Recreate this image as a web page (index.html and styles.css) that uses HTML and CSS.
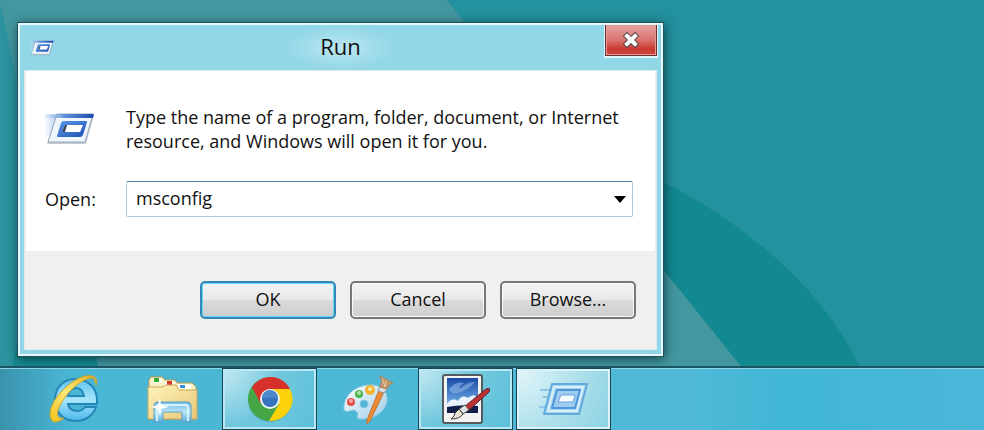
FILE: index.html
```html
<!DOCTYPE html>
<html lang="en">
<head>
    <meta charset="UTF-8">
    <meta name="viewport" content="width=device-width, initial-scale=1">
    <title>Run</title>
    <link rel="stylesheet" href="styles.css">
</head>
<body>

<!-- Wallpaper -->
<svg class="wallpaper" viewBox="0 0 984 430" preserveAspectRatio="xMinYMin slice" aria-hidden="true">
    <rect width="984" height="430" fill="#24919e"/>
    <path d="M560 140C690 180 810 262 860 367L892 430H400V140Z" fill="#128890"/>
    <path d="M0 0H447L792 430H0Z" fill="#44979f"/>
    <path d="M0 5C12 50 28 130 34 240L34 340L98 356L100 430H0Z" fill="#2b929e"/>
    <path d="M15 350H92L98 366V430H5Z" fill="#168a91"/>
</svg>

<main class="desktop">
    <section class="window" aria-labelledby="title">
        <header class="titlebar">
            <svg class="title-icon" viewBox="0 0 50 40" aria-hidden="true"><use href="#run-icon"/></svg>
            <h1 class="title" id="title">Run</h1>
            <button class="close-btn" type="button" aria-label="Close">
                <svg width="20" height="16" viewBox="0 0 20 16">
                    <path d="M6 4L14 12M14 4L6 12" stroke="#54444a" stroke-width="6" stroke-linecap="square"/>
                    <path d="M6 4L14 12M14 4L6 12" stroke="#fff" stroke-width="4" stroke-linecap="square"/>
                </svg>
            </button>
        </header>

        <form class="dialog">
            <div class="dialog-body">
                <svg class="run-icon" viewBox="0 0 50 40" aria-hidden="true"><use href="#run-icon"/></svg>
                <p class="message">Type the name of a program, folder, document, or Internet resource, and Windows will open it for you.</p>
                <label class="open-label" for="txtOpen">Open:</label>
                <div class="combo">
                    <input type="text" name="txtOpen" id="txtOpen" value="msconfig">
                    <button class="combo-btn" type="button" aria-label="Show list">
                        <svg width="12" height="7" viewBox="0 0 12 7"><path d="M0 0H12L6 7Z"/></svg>
                    </button>
                </div>
            </div>
            <div class="dialog-footer">
                <button class="btn default-btn" type="submit">OK</button>
                <button class="btn" type="button">Cancel</button>
                <button class="btn" type="button">Browse...</button>
            </div>
        </form>
    </section>
</main>

<nav class="taskbar" aria-label="Taskbar">
    <button class="task" type="button" aria-label="Internet Explorer">
        <svg width="52" height="52" viewBox="0 0 52 52">
            <defs>
                <linearGradient id="ie-blue" x1="0" y1="0" x2="0" y2="1">
                    <stop offset="0" stop-color="#5cc3ee"/>
                    <stop offset=".5" stop-color="#a6e6fb"/>
                    <stop offset="1" stop-color="#4ab6ea"/>
                </linearGradient>
                <linearGradient id="ie-gold" x1="0" y1="1" x2="1" y2="0">
                    <stop offset="0" stop-color="#f2c21b"/>
                    <stop offset=".5" stop-color="#ffe878"/>
                    <stop offset="1" stop-color="#e5b119"/>
                </linearGradient>
            </defs>
            <path fill-rule="evenodd" d="M27 6C40 6 49 15 49 27V31H20C21 36 24 38 29 38C33 38 35 37 37 34H48C45 43 37 48 28 48C15 48 7 39 7 27C7 15 15 6 27 6ZM20 23H36C35 18 33 15 28 15C23 15 21 18 20 23Z" fill="url(#ie-blue)" stroke="#2586b8" stroke-width="2"/>
            <path d="M48 12C52 1 38 -1 23 10C8 21 -1 37 3 46C5 51 11 49 16 45C6 47 8 36 18 23C28 10 43 2 46 6C47 8 48 10 48 12Z" fill="url(#ie-gold)" stroke="#c9a52d" stroke-width="1"/>
        </svg>
    </button>
    <button class="task" type="button" aria-label="File Explorer">
        <svg width="54" height="52" viewBox="0 0 54 52">
            <defs>
                <linearGradient id="folder" x1="0" y1="0" x2="1" y2="1">
                    <stop offset="0" stop-color="#fff3ba"/>
                    <stop offset="1" stop-color="#e6c779"/>
                </linearGradient>
                <linearGradient id="glass" x1="0" y1="0" x2="0" y2="1">
                    <stop offset="0" stop-color="#72bce5"/>
                    <stop offset=".5" stop-color="#b9e5f7"/>
                    <stop offset="1" stop-color="#5caee0"/>
                </linearGradient>
            </defs>
            <path d="M4 46V7L6 4H17L20 7H30L32 10H47L51 14V46Z" fill="#f9efc6" stroke="#bf9c4f"/>
            <path d="M8 5H17V10H8Z" fill="#fffef0"/><path d="M9 5H14V9H9Z" fill="#2caf32"/>
            <path d="M20 8H30V13H20Z" fill="#fffef0"/><path d="M22 8H27V12H22Z" fill="#d63a27"/>
            <path d="M33 11H46V16H33Z" fill="#fffef0"/><path d="M35 12H40V15H35Z" fill="#2c91d8"/>
            <path d="M3 14H18L21 12H31L34 17H52V46H3Z" fill="url(#folder)" stroke="#cba85a"/>
            <path d="M9 49V33Q9 29 13 29H42Q46 29 46 33V49H37V40Q37 39 36 39H19Q18 39 18 40V49Z" fill="url(#glass)" stroke="#579fc9"/>
            <path d="M12 48V35Q12 32 14 32H41Q43 32 43 35V48" fill="none" stroke="#d5f1fc" stroke-width="2"/>
            <path d="M15 24L16 32L24 34L16 36L15 43L13 36L6 34L13 32Z" fill="#fff"/>
        </svg>
    </button>
    <button class="task open" type="button" aria-label="Google Chrome">
        <svg width="48" height="48" viewBox="0 0 48 48">
            <circle cx="24" cy="25" r="22" fill="#2b7d97" opacity=".4"/>
            <circle cx="24" cy="24" r="22" fill="#45a646"/>
            <path d="M24 14H44A22 22 0 0 1 23 46L33 29Z" fill="#fcd20b"/>
            <path d="M24 14H44A22 22 0 0 0 6 12L15 29Z" fill="#d8302b"/>
            <circle cx="24" cy="24" r="10" fill="#f0f5f8"/>
            <circle cx="24" cy="24" r="8" fill="#3774bd"/>
            <path d="M16 23A8 8 0 0 1 32 23Q24 22 16 23Z" fill="#4e88cb"/>
        </svg>
    </button>
    <button class="task" type="button" aria-label="Paint">
        <svg width="52" height="52" viewBox="0 0 52 52">
            <defs>
                <linearGradient id="palette" x1="0" y1="0" x2="1" y2="1">
                    <stop offset="0" stop-color="#fff"/>
                    <stop offset="1" stop-color="#9bcde8"/>
                </linearGradient>
            </defs>
            <path fill-rule="evenodd" d="M2 37C1 23 12 13 27 12C39 11 46 18 45 28C43 40 30 47 17 46C13 45 18 41 14 38C10 35 7 41 2 37ZM22 27A4 4 0 1 0 22 35A4 4 0 1 0 22 27Z" fill="url(#palette)" stroke="#8fc6df"/>
            <circle cx="9" cy="29" r="4" fill="#e34f47"/><circle cx="9" cy="28" r="2" fill="#f5aaa4"/>
            <circle cx="17" cy="21" r="4" fill="#4bb64d"/><circle cx="17" cy="20" r="2" fill="#b1e4a7"/>
            <circle cx="28" cy="17" r="5" fill="#f3b32d"/><circle cx="28" cy="16" r="2" fill="#ffe5a0"/>
            <path d="M37 17L42 19L28 48L25 51V47Z" fill="#ec8b35" stroke="#c9742f"/>
            <path d="M38 13L45 16L42 20L36 18Z" fill="#dce2e4" stroke="#8798a0"/>
            <path d="M38 3L51 10Q46 11 45 16L38 14Q41 8 38 3Z" fill="#c4996a" stroke="#a4825d"/>
            <path d="M40 5L43 14M44 7L43 14" stroke="#e6c69a"/>
        </svg>
    </button>
    <button class="task open" type="button" aria-label="Paint.NET">
        <svg width="50" height="52" viewBox="0 0 50 52">
            <defs>
                <linearGradient id="sky" x1="0" y1="0" x2="0" y2="1">
                    <stop offset="0" stop-color="#1949a6"/>
                    <stop offset=".6" stop-color="#5d98d9"/>
                    <stop offset="1" stop-color="#bddcf1"/>
                </linearGradient>
            </defs>
            <rect x="2" y="2" width="39" height="48" rx="2" fill="#f4f4f4" stroke="#555a5e" stroke-width="2"/>
            <rect x="6" y="5" width="31" height="35" fill="url(#sky)"/>
            <path d="M8 16Q15 8 23 10Q17 13 19 16Q27 8 34 9Q27 18 16 20Q10 21 8 16Z" fill="#8db5e4" opacity=".6"/>
            <path d="M6 31Q11 24 17 28Q21 21 27 25Q34 19 37 26V36H6Z" fill="#eaf3fb"/>
            <path d="M6 34Q20 31 37 33V40H6Z" fill="#101d48"/>
            <path d="M23 34L45 16Q50 14 48 19L27 38Z" fill="#ba3033" stroke="#5f2029"/>
            <path d="M18 36L24 32L28 37L22 41Z" fill="#dce2e4" stroke="#555"/>
            <path d="M18 36L22 41Q19 46 10 46Q14 43 14 40Z" fill="#e9e0cf" stroke="#333"/>
        </svg>
    </button>
    <button class="task open active" type="button" aria-label="Run">
        <svg width="50" height="36" viewBox="0 0 50 36">
            <path d="M1 9H12M4 16H11M0 26H8" stroke="#8cc8e6" stroke-width="2"/>
            <path d="M13 3H48L40 33H5Z" fill="#a3d5f0" stroke="#62a9dc" stroke-width="2" stroke-linejoin="round"/>
            <path d="M15 6H44L38 30H9Z" fill="none" stroke="#d9f0fb" stroke-width="2"/>
            <path d="M18 9H41L36 27H13Z" fill="#9ccdf0" stroke="#4f97d8" stroke-width="2" stroke-linejoin="round"/>
            <path d="M22 14H36L34 21H19Z" fill="#f8fcff" stroke="#6b9fe0"/>
        </svg>
    </button>
</nav>

<!-- Shared icon for the title bar and the dialog -->
<svg class="sprite" aria-hidden="true">
    <defs>
        <linearGradient id="run-top" x1="0" y1="0" x2="1" y2="0">
            <stop offset="0" stop-color="#9fc4ef" stop-opacity=".2"/>
            <stop offset=".4" stop-color="#5e8fdb"/>
            <stop offset="1" stop-color="#1d4cae"/>
        </linearGradient>
        <linearGradient id="run-blue" x1="0" y1="0" x2="1" y2="1">
            <stop offset="0" stop-color="#5c9ae8"/>
            <stop offset="1" stop-color="#1e51b5"/>
        </linearGradient>
        <linearGradient id="run-trail" x1="0" y1="0" x2="1" y2="0">
            <stop offset="0" stop-color="#c6dcf6" stop-opacity=".1"/>
            <stop offset="1" stop-color="#adccef"/>
        </linearGradient>
        <symbol id="run-icon" viewBox="0 0 50 40">
            <path d="M0 6H12L5 27H0Z" fill="url(#run-trail)"/>
            <path d="M12 6H49L41 35H2Z" fill="#8797a5" opacity=".5"/>
            <path d="M12 5H48L40 33H3Z" fill="#f0f6fd" stroke="#97a7b5"/>
            <path d="M0 5H49L48 9H0Z" fill="url(#run-top)"/>
            <path d="M18 12H41Q42 12 42 13L38 26Q37 28 35 28H13Q12 28 12 27L16 14Q17 12 18 12Z" fill="url(#run-blue)"/>
            <path d="M20 16H38L35 23H17Z" fill="#fff"/>
            <path d="M20 16H22L20 23H17Z" fill="#35435a"/>
        </symbol>
    </defs>
</svg>

</body>
</html>
```

FILE: styles.css
```css
* {
    box-sizing: border-box;
}
body {
    margin: 0;
    min-height: 100vh;
    display: flex;
    flex-direction: column;
    overflow: hidden;
    font-family: "Open Sans", "Noto Sans", sans-serif;
    font-size: 18px;
    line-height: 24px;
    color: #111;
    background-color: #24919e;
}
button, input {
    font: inherit;
    color: inherit;
}
svg {
    display: block;
    fill: none;
}
.wallpaper {
    position: absolute;
    top: 0;
    left: 0;
    width: 100%;
    height: 100%;
    z-index: -1;
}
.sprite {
    position: absolute;
    width: 0;
    height: 0;
}

/* Window */
.desktop {
    flex: 1;
    padding: 23px 18px 10px;
}
.window {
    max-width: 645px;
    padding: 0 4px 4px;
    border: 2px solid #e2f8fd;
    background: #92d7e7;
    outline: 1px solid #24535c;
    box-shadow: 1px 2px 10px 1px rgba(0, 35, 45, 0.7);
}
.titlebar {
    display: grid;
    grid-template-columns: 56px 1fr 56px;
    align-items: center;
    height: 45px;
}
.title-icon {
    width: 24px;
    height: 20px;
    margin-left: 6px;
}
.title {
    justify-self: center;
    margin: 0;
    padding: 4px 36px 8px;
    font-size: 22px;
    font-weight: normal;
    line-height: 32px;
    background: radial-gradient(closest-side, #bbe6f1, #92d7e7);
}
.close-btn {
    align-self: start;
    justify-self: end;
    display: flex;
    align-items: center;
    justify-content: center;
    width: 52px;
    height: 31px;
    padding: 0;
    border: 1px solid #702c33;
    border-top: 0;
    background: linear-gradient(#e6a5a3, #d9736f 50%, #c83a2f 80%, #cf4338);
    box-shadow: inset 0 0 0 1px #e79a94, 0 1px 0 1px #dff5fa;
}

/* Dialog */
.dialog {
    border: 1px solid #dfeaed;
    background: #f0f0f0;
}
.dialog-body {
    display: grid;
    grid-template-columns: 81px 1fr;
    align-items: center;
    row-gap: 28px;
    margin: 0 1px;
    padding: 34px 22px 34px 19px;
    background: #fff;
}
.run-icon {
    width: 50px;
    height: 40px;
}
.message {
    margin: 0;
}
.combo {
    display: flex;
    height: 36px;
    border: 1px solid #a9cfe5;
    border-top-color: #49799f;
    border-radius: 2px;
    background: #fff;
}
.combo input {
    flex: 1;
    min-width: 0;
    padding: 0 9px 2px;
    border: 0;
    outline: 0;
    background: none;
}
.combo-btn {
    padding: 0 6px;
    border: 0;
    background: none;
}
.combo-btn path {
    fill: #000;
}
.dialog-footer {
    display: flex;
    justify-content: flex-end;
    gap: 14px;
    padding: 30px 20px 30px;
}
.btn {
    width: 136px;
    height: 38px;
    padding: 0 0 2px;
    border: 2px solid #777;
    border-radius: 5px;
    background: linear-gradient(#f3f3f3, #e9e9e9 48%, #dadada 52%, #cecece);
    box-shadow: inset 0 0 0 1px #fafafa;
}
.default-btn {
    border-color: #3488b5;
    box-shadow: inset 0 0 0 1px #6bd5f7;
}

/* Taskbar */
.taskbar {
    display: flex;
    gap: 3px;
    height: 64px;
    padding-left: 26px;
    border-top: 2px solid #1b5666;
    background: linear-gradient(90deg, #3a93ad, #49b6d4 7%, #50b9d8 70%, #41b6d5 80%, #4bb7d8);
    box-shadow: inset 0 1px 0 #8fd3e4;
}
.task {
    display: flex;
    align-items: center;
    justify-content: center;
    width: 95px;
    height: 62px;
    padding: 0;
    border: 0;
    background: none;
}
.task.open {
    border: 1px solid #164554;
    background: radial-gradient(circle at top left, #c4e9f2, #72c8de 50%, #5bbfd9);
    box-shadow: inset 0 0 0 2px #b9e8f3;
}
.task.active {
    background: radial-gradient(circle at top left, #e4f6fa, #aadeea 60%, #8bd2e3);
    box-shadow: inset 0 0 0 2px #daf4fa;
}
```
